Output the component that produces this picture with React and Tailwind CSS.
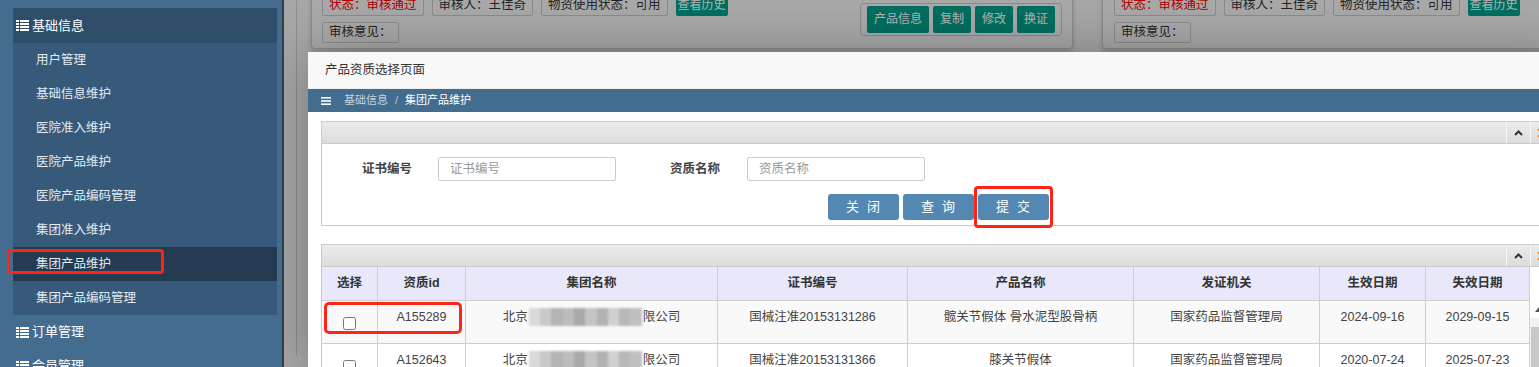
import React from 'react';

const FONT = "font-['Liberation_Sans','Noto_Sans_CJK_SC',sans-serif]";

const menu = [
  '用户管理',
  '基础信息维护',
  '医院准入维护',
  '医院产品维护',
  '医院产品编码管理',
  '集团准入维护',
  '集团产品维护',
  '集团产品编码管理',
];

const rows = [
  {
    id: 'A155289',
    cert: '国械注准20153131286',
    product: '髋关节假体 骨水泥型股骨柄',
    org: '国家药品监督管理局',
    start: '2024-09-16',
    end: '2029-09-15',
    bg: 'bg-[#f9f9f9]',
    marked: true,
  },
  {
    id: 'A152643',
    cert: '国械注准20153131366',
    product: '膝关节假体',
    org: '国家药品监督管理局',
    start: '2020-07-24',
    end: '2025-07-23',
    bg: 'bg-white',
  },
];

function ListIcon() {
  return (
    <svg width="13" height="11" viewBox="0 0 13 11" className="shrink-0">
      {[0, 1, 2, 3].map((i) => (
        <g key={i} fill="#ffffff">
          <rect x="0" y={i * 3} width="3" height="2" />
          <rect x="4" y={i * 3} width="9" height="2" />
        </g>
      ))}
    </svg>
  );
}

function BarsIcon() {
  return (
    <svg width="10" height="8" viewBox="0 0 10 8" className="shrink-0">
      <rect x="0" y="0" width="10" height="1.6" fill="#fff" />
      <rect x="0" y="3.2" width="10" height="1.6" fill="#fff" />
      <rect x="0" y="6.4" width="10" height="1.6" fill="#fff" />
    </svg>
  );
}

function Sidebar() {
  return (
    <aside className="relative z-10 w-[284px] shrink-0 border-r-2 border-[#2c3e50] bg-[#446c8e] pl-[13px] pr-[5px] pt-[8px]">
      <div className="bg-[#385a7a]">
        <div className="flex h-[35px] items-center gap-[3px] bg-[#2f4e6a] pl-[3px] text-[13px] text-white">
          <ListIcon />
          基础信息
        </div>
        {menu.map((m) => {
          const active = m === '集团产品维护';
          return (
            <div
              key={m}
              className={`relative flex h-[34px] items-center pl-[23px] text-[12.5px] text-[#e2eaf1] ${active ? 'bg-[#253b51]' : ''}`}
            >
              {m}
              {active && (
                <span className="absolute left-[-6px] top-[2px] h-[25px] w-[157px] rounded-[4px] border-[3px] border-[#ff2418]" />
              )}
            </div>
          );
        })}
      </div>
      <div className="flex h-[34px] items-center gap-[3px] pl-[3px] text-[13px] text-white">
        <ListIcon />
        订单管理
      </div>
      <div className="flex h-[34px] items-center gap-[3px] pl-[3px] text-[13px] text-white">
        <ListIcon />
        会员管理
      </div>
    </aside>
  );
}

function Tag({ children, red }) {
  return (
    <span
      className={`shrink-0 whitespace-nowrap rounded-[2px] border border-[#c8c8c8] px-[6px] text-[12.5px] leading-[19px] ${red ? 'text-[#ff0000]' : 'text-[#333]'}`}
    >
      {children}
    </span>
  );
}

function InfoRows() {
  return (
    <div className="flex shrink-0 flex-col items-start gap-[6px]">
      <div className="flex items-center gap-[8px]">
        <Tag red>状态：审核通过</Tag>
        <Tag>审核人：王佳奇</Tag>
        <Tag>物资使用状态：可用</Tag>
        <span className="shrink-0 whitespace-nowrap rounded-[2px] bg-[#00a08a] px-[2px] text-[12px] leading-[21px] text-white">
          查看历史
        </span>
      </div>
      <Tag>审核意见：</Tag>
    </div>
  );
}

function BackgroundPage() {
  return (
    <div className="ml-[12px] h-full border-l border-[#c9c9c9]">
      <div className="-mt-[12px] ml-[14px] flex items-start gap-[29px]">
        <div className="flex w-[762px] shrink-0 items-center justify-between rounded-b-[4px] border border-[#c8c8c8] bg-[#f3f3f3] pb-[5px] pl-[10px] pr-[10px] pt-[6px] shadow-[0_2px_4px_rgba(0,0,0,0.18)]">
          <InfoRows />
          <div className="flex shrink-0 gap-[4px] rounded-[3px] border border-[#c8c8c8] px-[6px] py-[2px]">
            {['产品信息', '复制', '修改', '换证'].map((b) => (
              <span
                key={b}
                className="whitespace-nowrap rounded-[2px] bg-[#00a08a] px-[7px] text-[12px] leading-[27px] text-white"
              >
                {b}
              </span>
            ))}
          </div>
        </div>
        <div className="w-[600px] shrink-0 rounded-b-[4px] border border-[#c8c8c8] bg-[#f3f3f3] pb-[5px] pl-[11px] pt-[6px] shadow-[0_2px_4px_rgba(0,0,0,0.18)]">
          <InfoRows />
        </div>
      </div>
    </div>
  );
}

function PanelHead() {
  return (
    <div className="flex h-[22px] justify-end border-b border-[#cccccc] bg-gradient-to-b from-[#ececec] to-[#dcdcdc]">
      <div className="flex w-[24px] items-center justify-center border-l border-[#f7f7f7]">
        <svg width="9" height="6" viewBox="0 0 9 6">
          <path d="M1 5 L4.5 1.5 L8 5" fill="none" stroke="#333" strokeWidth="2" />
        </svg>
      </div>
      <div className="flex w-[24px] items-center border-l border-[#f7f7f7] pl-[5px]">
        <svg width="12" height="12" viewBox="0 0 12 12">
          <path d="M2 2 L10 10 M10 2 L2 10" fill="none" stroke="#e8923a" strokeWidth="2.4" />
        </svg>
      </div>
    </div>
  );
}

function Btn({ children }) {
  return (
    <span className="flex h-[26px] w-[71px] items-center justify-center rounded-[3px] bg-[#5288b2] pl-[8px] text-[13px] tracking-[8px] text-white">
      {children}
    </span>
  );
}

function Blur() {
  const shades = ['#dadada', '#c9c9c9', '#b4b4b4', '#bdbdbd', '#a9a9a9', '#c4c4c4', '#b2b2b2', '#d0d0d0', '#b8b8b8', '#c0c0c0'];
  return (
    <span className="mx-[1px] inline-flex h-[18px] w-[113px] blur-[1px]">
      {shades.map((c, i) => (
        <span key={i} className="h-full flex-1" style={{ backgroundColor: c }} />
      ))}
    </span>
  );
}

const headers = ['选择', '资质id', '集团名称', '证书编号', '产品名称', '发证机关', '生效日期', '失效日期'];

function Table() {
  return (
    <div>
      <div className="grid w-[1208px] grid-cols-[56px_88px_252px_190px_226px_186px_106px_104px] bg-[#e8e8fa]">
        {headers.map((h) => (
          <div
            key={h}
            className="flex h-[34px] items-center justify-center border-b border-r border-[#cfcfcf] text-[12.5px] font-bold text-[#333]"
          >
            {h}
          </div>
        ))}
      </div>
      <div className="flex">
        <div className="w-[1208px]">
          {rows.map((r) => (
            <div
              key={r.id}
              className={`relative grid h-[43px] grid-cols-[56px_88px_252px_190px_226px_186px_106px_104px] text-[12.5px] leading-[16px] text-[#444] ${r.bg}`}
            >
              <div className="flex justify-center border-b border-r border-[#cfcfcf] pt-[16px]">
                <input type="checkbox" readOnly className="h-[13px] w-[13px]" />
              </div>
              <div className="border-b border-r border-[#cfcfcf] pt-[8px] text-center">{r.id}</div>
              <div className="border-b border-r border-[#cfcfcf] pt-[7px] text-center">
                <span className="inline-flex items-center align-top">
                  北京
                  <Blur />
                  限公司
                </span>
              </div>
              <div className="border-b border-r border-[#cfcfcf] pt-[8px] text-center">{r.cert}</div>
              <div className="border-b border-r border-[#cfcfcf] pt-[8px] text-center">{r.product}</div>
              <div className="border-b border-r border-[#cfcfcf] pt-[8px] text-center">{r.org}</div>
              <div className="border-b border-r border-[#cfcfcf] pt-[8px] text-center">{r.start}</div>
              <div className="border-b border-r border-[#cfcfcf] pt-[8px] text-center">{r.end}</div>
              {r.marked && (
                <span className="absolute left-[2px] top-[1px] h-[32px] w-[138px] rounded-[5px] border-[3px] border-[#ff2418]" />
              )}
            </div>
          ))}
        </div>
        <div className="w-[17px] shrink-0 bg-[#f1f1f1]">
          <div className="flex h-[17px] items-center justify-center bg-white">
            <svg width="8" height="5" viewBox="0 0 8 5">
              <path d="M0 5 L4 0 L8 5 Z" fill="#505050" />
            </svg>
          </div>
          <div className="ml-[1px] mt-[9px] h-[80px] w-[15px] bg-[#c8c8c8]" />
        </div>
      </div>
    </div>
  );
}

function Modal() {
  return (
    <div className="absolute bottom-0 left-[24px] top-[52px] w-[1260px] bg-white shadow-[1px_1px_50px_rgba(0,0,0,0.3)]">
      <div className="flex h-[37px] items-center border-b border-[#eeeeee] bg-[#f8f8f8] pl-[17px] text-[12.5px] text-[#333]">
        产品资质选择页面
      </div>
      <div className="flex h-[23px] items-center bg-[#436d8f] pl-[13px] text-[11px]">
        <BarsIcon />
        <span className="ml-[13px] text-[#c6d2dd]">基础信息</span>
        <span className="mx-[7px] text-[#b8c5d1]">/</span>
        <span className="text-white">集团产品维护</span>
      </div>
      <div className="px-[13px] pt-[9px]">
        <div className="border border-[#cccccc]">
          <PanelHead />
          <div className="pb-[5px] pt-[13px]">
            <div className="flex items-center text-[12.5px]">
              <label className="w-[90px] text-right font-bold text-[#444]">证书编号</label>
              <input
                placeholder="证书编号"
                className="ml-[26px] h-[24px] w-[178px] rounded-[2px] border border-[#cccccc] px-[11px] text-[12.5px] outline-none placeholder:text-[#999]"
              />
              <label className="ml-[14px] w-[90px] text-right font-bold text-[#444]">资质名称</label>
              <input
                placeholder="资质名称"
                className="ml-[27px] h-[24px] w-[178px] rounded-[2px] border border-[#cccccc] px-[11px] text-[12.5px] outline-none placeholder:text-[#999]"
              />
            </div>
            <div className="mt-[13px] flex justify-center gap-[4px]">
              <Btn>关闭</Btn>
              <Btn>查询</Btn>
              <span className="relative">
                <Btn>提交</Btn>
                <span className="absolute left-[-4px] top-[-8px] h-[42px] w-[79px] rounded-[4px] border-[3px] border-[#ff2418]" />
              </span>
            </div>
          </div>
        </div>
        <div className="mt-[18px] border border-[#cccccc]">
          <PanelHead />
          <Table />
        </div>
      </div>
    </div>
  );
}

export default function App() {
  return (
    <div className={`flex h-[367px] w-[1539px] overflow-hidden ${FONT}`}>
      <Sidebar />
      <main className="relative flex-1 overflow-hidden bg-[#efefef]">
        <BackgroundPage />
        <div className="absolute inset-0 bg-black/30" />
        <Modal />
      </main>
    </div>
  );
}
